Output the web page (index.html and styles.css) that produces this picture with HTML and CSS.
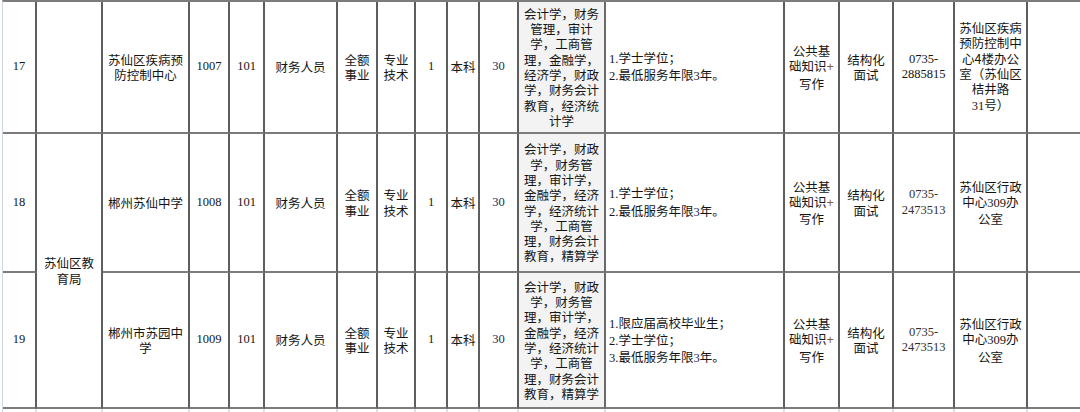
FILE: index.html
```html
<!DOCTYPE html>
<html lang="zh-CN">
<head>
<meta charset="utf-8">
<title>岗位表</title>
<link rel="stylesheet" href="styles.css">
</head>
<body>
<div class="sheet">
  <!-- row 17 -->
  <div class="c num"><div>17</div></div>
  <div class="c"></div>
  <div class="c"><div>苏仙区疾病预防控制中心</div></div>
  <div class="c num"><div>1007</div></div>
  <div class="c num"><div>101</div></div>
  <div class="c"><div>财务人员</div></div>
  <div class="c"><div>全额<br>事业</div></div>
  <div class="c"><div>专业<br>技术</div></div>
  <div class="c num"><div>1</div></div>
  <div class="c"><div>本科</div></div>
  <div class="c num navy"><div>30</div></div>
  <div class="c major"><div>会计学，财务<br>管理，审计<br>学，工商管<br>理，金融学，<br>经济学，财政<br>学，财务会计<br>教育，经济统<br>计学</div></div>
  <div class="c req"><div><span class="n">1.</span>学士学位；<br><span class="n">2.</span>最低服务年限<span class="n">3</span>年。</div></div>
  <div class="c"><div>公共基<br>础知识<span class="plus">+</span><br>写作</div></div>
  <div class="c"><div>结构化<br>面试</div></div>
  <div class="c num"><div>0735-<br>2885815</div></div>
  <div class="c"><div>苏仙区疾病<br>预防控制中<br>心4楼办公<br>室（苏仙区<br>桔井路<br><span class="n">31</span>号）</div></div>
  <div class="c last"></div>

  <!-- row 18 -->
  <div class="c num"><div>18</div></div>
  <div class="c span2"><div>苏仙区教<br>育局</div></div>
  <div class="c"><div>郴州苏仙中学</div></div>
  <div class="c num"><div>1008</div></div>
  <div class="c num"><div>101</div></div>
  <div class="c"><div>财务人员</div></div>
  <div class="c"><div>全额<br>事业</div></div>
  <div class="c"><div>专业<br>技术</div></div>
  <div class="c num"><div>1</div></div>
  <div class="c"><div>本科</div></div>
  <div class="c num navy"><div>30</div></div>
  <div class="c major"><div>会计学，财政<br>学，财务管<br>理，审计学，<br>金融学，经济<br>学，经济统计<br>学，工商管<br>理，财务会计<br>教育，精算学</div></div>
  <div class="c req"><div><span class="n">1.</span>学士学位；<br><span class="n">2.</span>最低服务年限<span class="n navy">3</span>年。</div></div>
  <div class="c"><div>公共基<br>础知识<span class="plus">+</span><br>写作</div></div>
  <div class="c"><div>结构化<br>面试</div></div>
  <div class="c num brown"><div>0735-<br>2473513</div></div>
  <div class="c"><div>苏仙区行政<br>中心<span class="n">309</span>办<br>公室</div></div>
  <div class="c last"></div>

  <!-- row 19 -->
  <div class="c num"><div>19</div></div>
  <div class="c"><div>郴州市苏园中<br>学</div></div>
  <div class="c num"><div>1009</div></div>
  <div class="c num"><div>101</div></div>
  <div class="c"><div>财务人员</div></div>
  <div class="c"><div>全额<br>事业</div></div>
  <div class="c"><div>专业<br>技术</div></div>
  <div class="c num"><div>1</div></div>
  <div class="c"><div>本科</div></div>
  <div class="c num navy"><div>30</div></div>
  <div class="c major"><div>会计学，财政<br>学，财务管<br>理，审计学，<br>金融学，经济<br>学，经济统计<br>学，工商管<br>理，财务会计<br>教育，精算学</div></div>
  <div class="c req wide"><div><span class="n">1.</span>限应届高校毕业生；<br><span class="n">2.</span>学士学位；<br><span class="n">3.</span>最低服务年限<span class="n navy">3</span>年。</div></div>
  <div class="c"><div>公共基<br>础知识<span class="plus">+</span><br>写作</div></div>
  <div class="c"><div>结构化<br>面试</div></div>
  <div class="c num brown"><div>0735-<br>2473513</div></div>
  <div class="c"><div>苏仙区行政<br>中心<span class="n">309</span>办<br>公室</div></div>
  <div class="c last"></div>

  <!-- next row stubs -->
  <div class="s"></div><div class="s"></div><div class="s"></div><div class="s"></div>
  <div class="s"></div><div class="s"></div><div class="s"></div><div class="s"></div>
  <div class="s"></div><div class="s"></div><div class="s"></div><div class="s"></div>
  <div class="s"></div><div class="s"></div><div class="s"></div><div class="s"></div>
  <div class="s"></div><div class="s last"></div>
</div>
</body>
</html>
```
FILE: styles.css
```css
html, body {
  margin: 0;
  padding: 0;
  background: #ffffff;
  overflow: hidden;
  width: 1080px;
  height: 412px;
}

.sheet {
  margin-left: 2px;
  border-left: 1px solid #cfd5de;
  border-top: 2px solid #7c7c7c;
  display: grid;
  grid-template-columns: 34px 66px 87px 40px 35px 73px 40px 38px 32px 32px 39px 87px 179px 55px 54px 61px 73px 1fr;
  grid-template-rows: 132px 139px 136px 40px;
  font-family: "Noto Sans CJK SC", "Liberation Sans", sans-serif;
  font-size: 12.5px;
  line-height: 15.3px;
  color: #151515;
}

.c {
  box-sizing: border-box;
  border-right: 2px solid #5e5e5e;
  border-bottom: 2px solid #7c7c7c;
  display: flex;
  align-items: center;
  justify-content: center;
  text-align: center;
  padding: 0 2px;
  overflow: hidden;
}

.c.last {
  border-right: none;
}

.span2 {
  grid-row: span 2;
  padding: 0 5px;
}

.num {
  font-family: "Liberation Serif", serif;
  font-size: 12.5px;
}

.n {
  font-family: "Liberation Serif", serif;
}

.navy {
  color: #1c2a5a;
}

.brown {
  color: #33302c;
}

.plus {
  font-family: "Liberation Sans", sans-serif;
  color: #8a5a2e;
}

.major {
  background: #f3f3f3;
  border-right-color: #6a6a6a;
}

.req {
  justify-content: flex-start;
  text-align: left;
  padding: 0 2px 0 3px;
}

.req.wide {
  line-height: 16px;
}

.s {
  box-sizing: border-box;
  border-right: 2px solid #dde2ea;
}

.s.last {
  border-right: none;
}
```
